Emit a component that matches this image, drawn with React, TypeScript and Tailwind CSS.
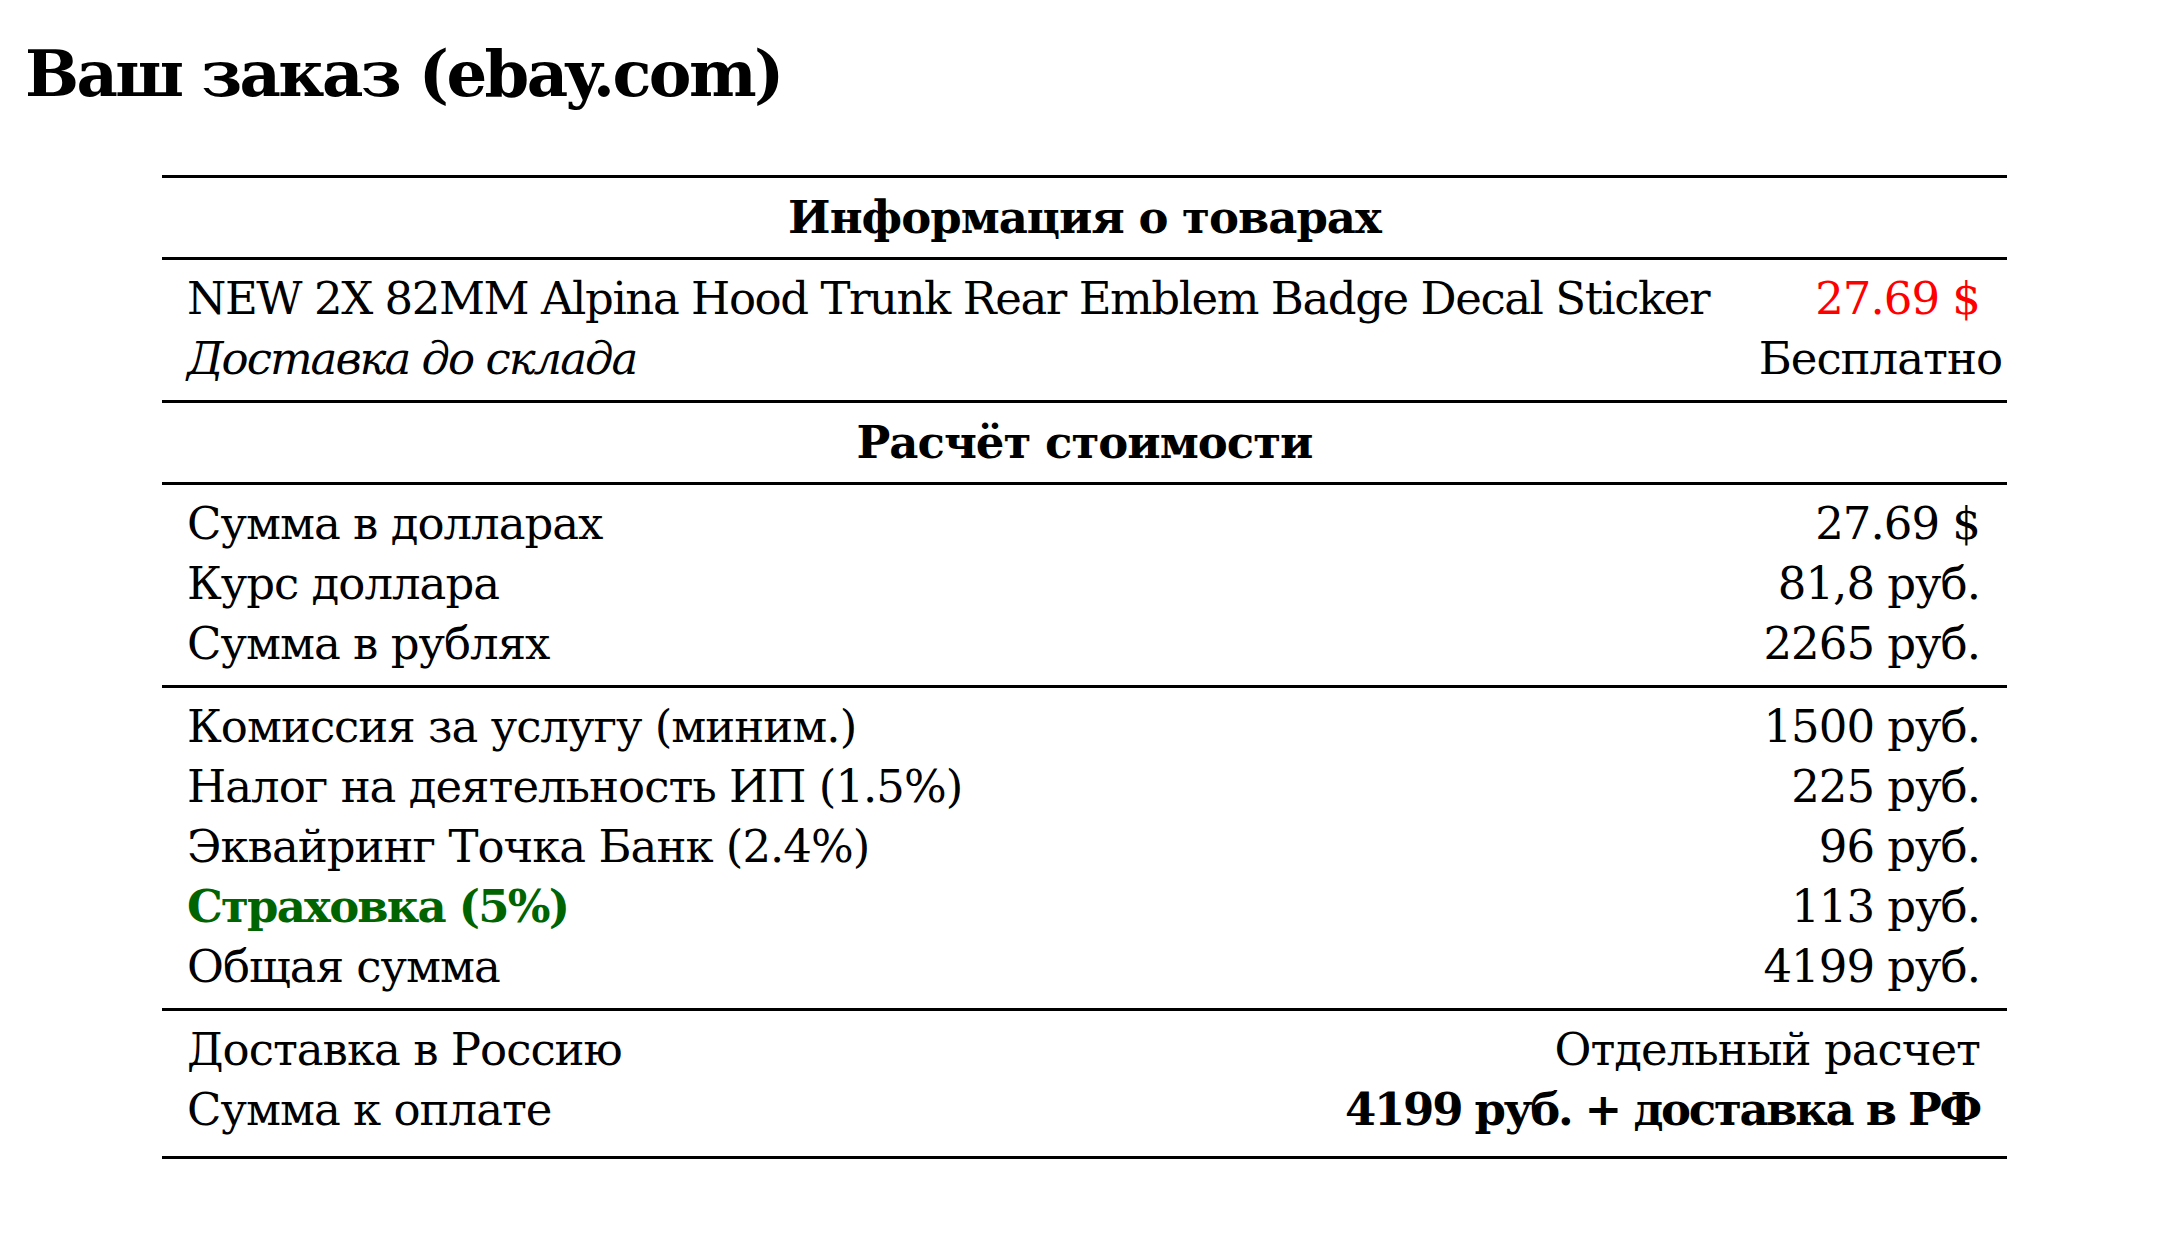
const rowsRate = [
  { label: 'Сумма в долларах', value: '27.69 $' },
  { label: 'Курс доллара', value: '81,8 руб.' },
  { label: 'Сумма в рублях', value: '2265 руб.' },
];

const rowsFees = [
  { label: 'Комиссия за услугу (миним.)', value: '1500 руб.' },
  { label: 'Налог на деятельность ИП (1.5%)', value: '225 руб.' },
  { label: 'Эквайринг Точка Банк (2.4%)', value: '96 руб.' },
  { label: 'Страховка (5%)', value: '113 руб.', green: true },
  { label: 'Общая сумма', value: '4199 руб.' },
];

function Row({ label, value, green }: { label: string; value: string; green?: boolean }) {
  return (
    <div className="flex justify-between pl-[25px] pr-[27px] h-[60px] leading-[60px] whitespace-nowrap">
      <span className={green ? 'font-bold text-[#006400] tracking-[-1.8px]' : ''}>{label}</span>
      <span>{value}</span>
    </div>
  );
}

function SectionHeader({ children }: { children: string }) {
  return (
    <div className="h-[82px] flex items-center justify-center font-bold border-b-[3px] border-black">
      {children}
    </div>
  );
}

export default function App() {
  return (
    <div className="min-h-screen bg-white text-black font-['DejaVu_Serif','Liberation_Serif',serif]">
      <h1 className="pl-[25px] pt-[42px] text-[64px] leading-none font-bold tracking-[-2.6px]">
        Ваш заказ (ebay.com)
      </h1>

      <div className="ml-[162px] w-[1845px] mt-[69px] border-t-[3px] border-b-[3px] border-black text-[45px] tracking-[-1px]">
        <SectionHeader>Информация о товарах</SectionHeader>

        {/* Item */}
        <div className="pt-[9px] pb-[11px] border-b-[3px] border-black whitespace-nowrap">
          <div className="flex justify-between pl-[25px] pr-[27px] h-[60px] leading-[60px]">
            <span className="tracking-[-1.45px]">NEW 2X 82MM Alpina Hood Trunk Rear Emblem Badge Decal Sticker</span>
            <span className="text-[#ff0000]">27.69 $</span>
          </div>
          <div className="flex justify-between pl-[25px] pr-[5px] h-[60px] leading-[60px]">
            <span className="italic tracking-[-2px]">Доставка до склада</span>
            <span>Бесплатно</span>
          </div>
        </div>

        <SectionHeader>Расчёт стоимости</SectionHeader>

        <div className="pt-[9px] pb-[11px] border-b-[3px] border-black">
          {rowsRate.map((r) => (
            <Row key={r.label} {...r} />
          ))}
        </div>

        <div className="pt-[9px] pb-[11px] border-b-[3px] border-black">
          {rowsFees.map((r) => (
            <Row key={r.label} {...r} />
          ))}
        </div>

        <div className="pt-[9px] pb-[16px]">
          <Row label="Доставка в Россию" value="Отдельный расчет" />
          <div className="flex justify-between pl-[25px] pr-[27px] h-[60px] leading-[60px] whitespace-nowrap">
            <span>Сумма к оплате</span>
            <span className="font-bold tracking-[-2.3px]">4199 руб. + доставка в РФ</span>
          </div>
        </div>
      </div>
    </div>
  );
}
